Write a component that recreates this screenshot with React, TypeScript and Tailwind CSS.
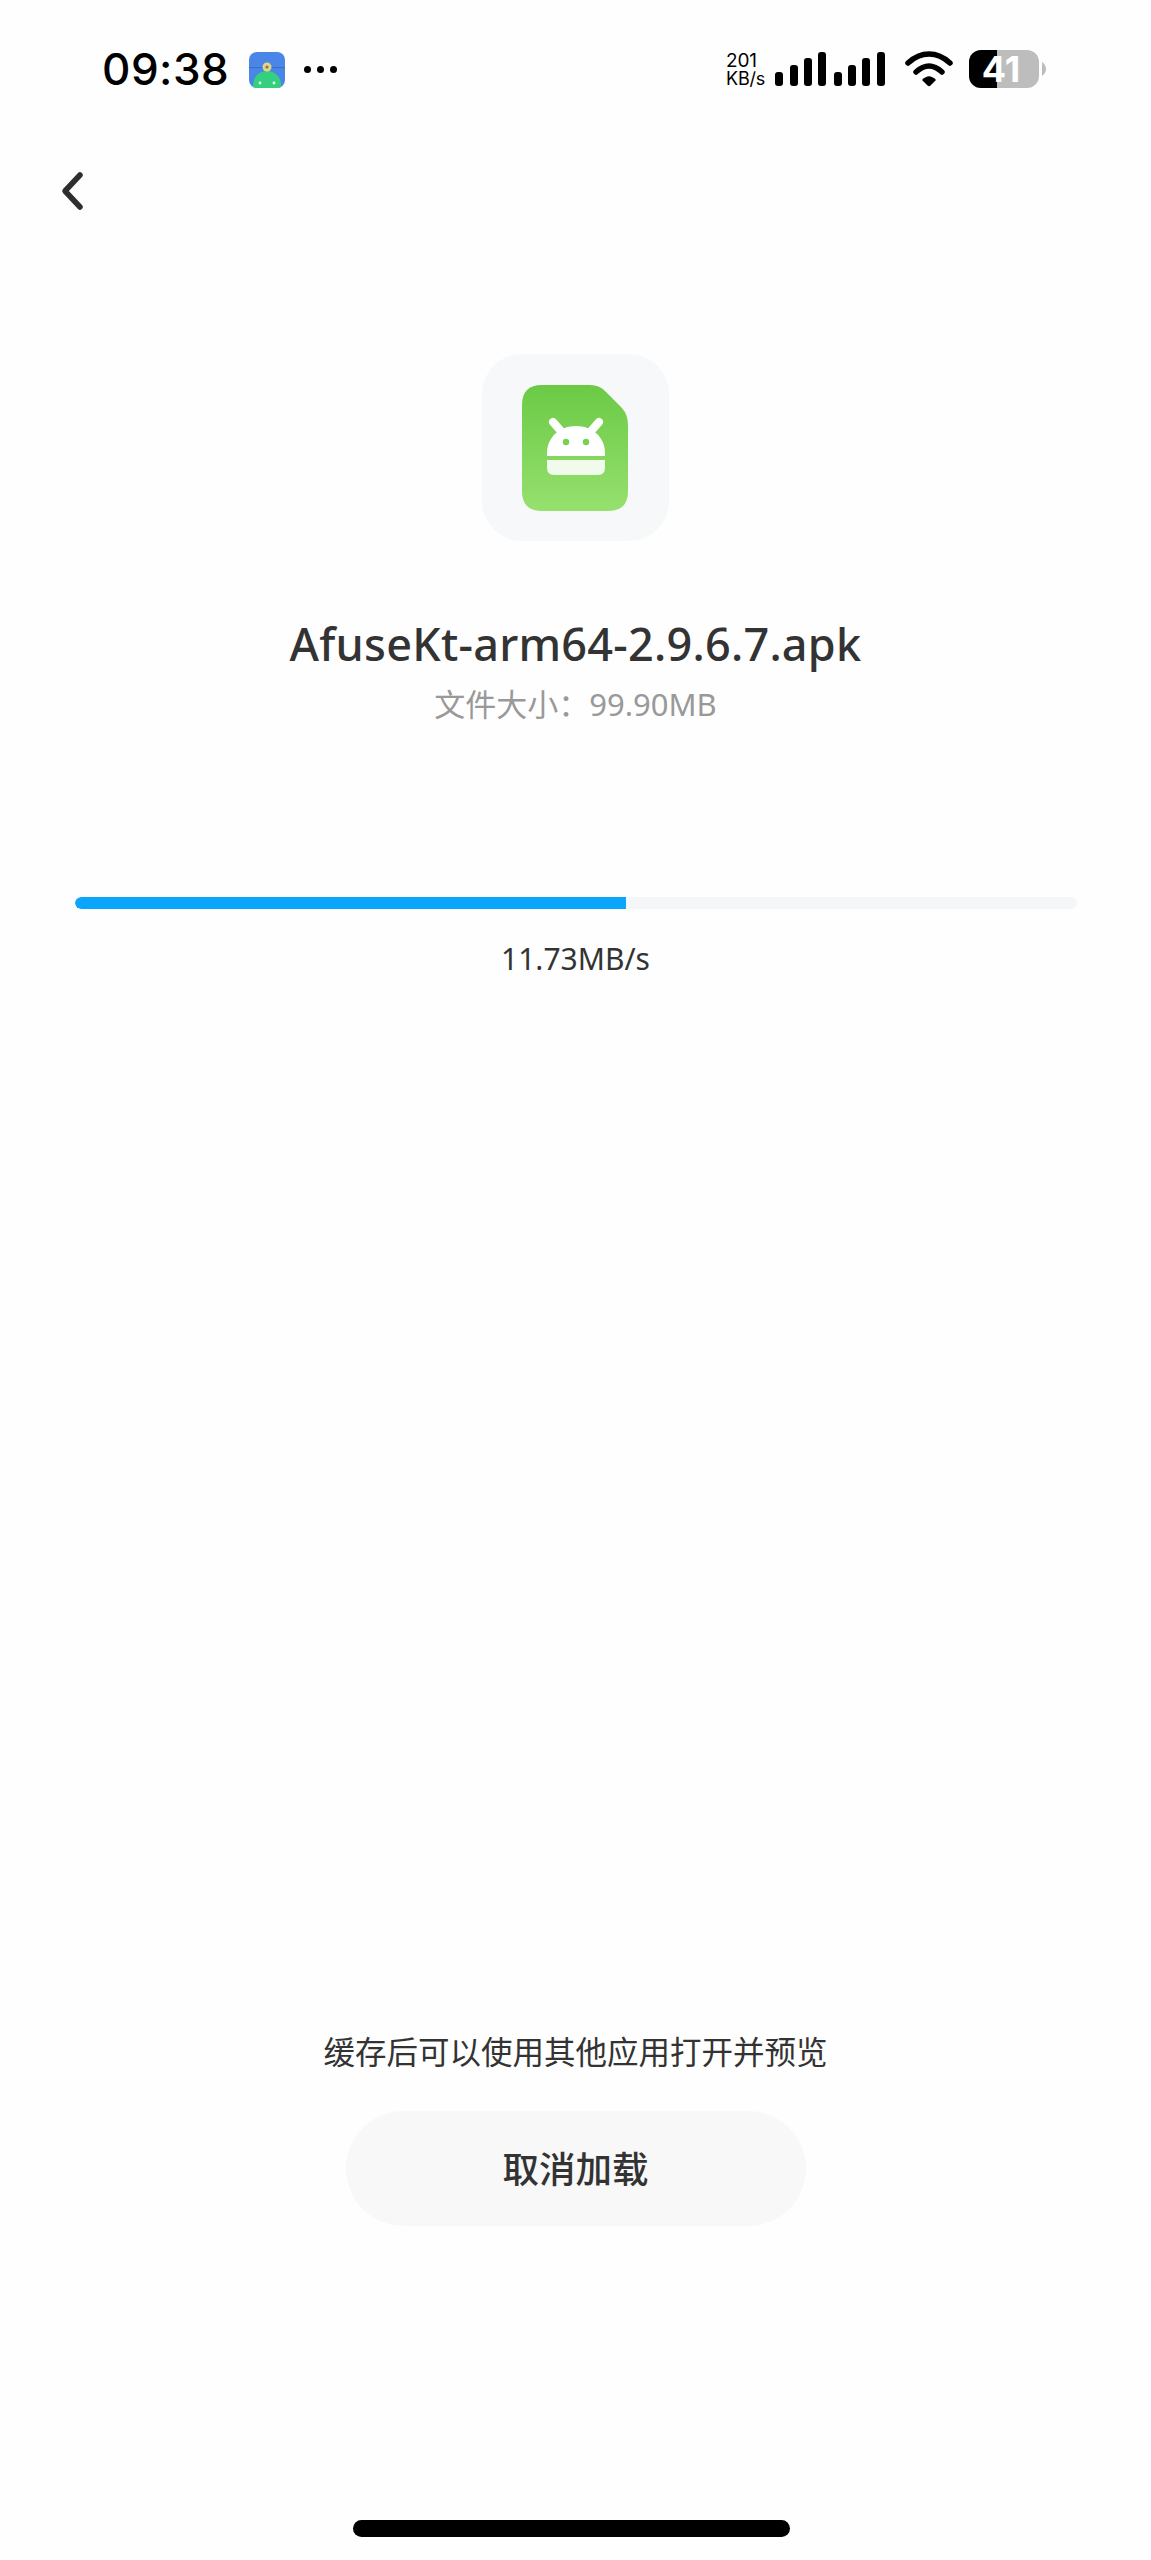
const cjk = 'font-["Noto_Sans","Noto_Sans_CJK_SC",sans-serif]'

function AppBadge() {
  return (
    <svg width="36" height="36" viewBox="0 0 36 36">
      <defs>
        <clipPath id="badge">
          <rect width="36" height="36" rx="8" />
        </clipPath>
      </defs>
      <g clipPath="url(#badge)">
        <rect width="36" height="36" fill="#4a86e8" />
        <rect y="15" width="36" height="1.2" fill="#3a6fc4" />
        <circle cx="18" cy="33" r="14" fill="#35d07f" />
        <circle cx="18" cy="15" r="4.5" fill="#e3d488" />
        <circle cx="18" cy="15" r="1.6" fill="#7c7c52" />
        <circle cx="11" cy="31" r="1.4" fill="#e8fff2" />
        <circle cx="25" cy="31" r="1.4" fill="#e8fff2" />
      </g>
    </svg>
  )
}

function StatusIcons() {
  return (
    <svg width="272" height="40" viewBox="0 0 272 40" className="block">
      {/* signal 1 */}
      <rect x="0" y="22" width="8" height="14" rx="3" fill="#000" />
      <rect x="15" y="15" width="8" height="21" rx="3" fill="#000" />
      <rect x="29" y="8" width="8" height="28" rx="3" fill="#000" />
      <rect x="43" y="2" width="8" height="34" rx="3" fill="#000" />
      {/* signal 2 */}
      <rect x="59" y="22" width="8" height="14" rx="3" fill="#000" />
      <rect x="73" y="15" width="8" height="21" rx="3" fill="#000" />
      <rect x="87" y="8" width="8" height="28" rx="3" fill="#000" />
      <rect x="102" y="2" width="8" height="34" rx="3" fill="#000" />
      {/* wifi */}
      <path d="M133 13 C146 1 162 1 175 13" fill="none" stroke="#000" strokeWidth="5.5" strokeLinecap="round" />
      <path d="M141 22 C150 14 158 14 167 22" fill="none" stroke="#000" strokeWidth="5.5" strokeLinecap="round" />
      <path d="M147 30 C152 25 156 25 161 30 L155.5 35.5 Q154 37 152.5 35.5 Z" fill="#000" />
      {/* battery */}
      <rect x="194" y="0" width="70" height="38" rx="12" fill="#bdbdbd" />
      <path d="M206 0 H222 V38 H206 A12 12 0 0 1 194 26 V12 A12 12 0 0 1 206 0 Z" fill="#000" />
      <path d="M267 12 Q271 15 271 19 Q271 23 267 26 Z" fill="#bdbdbd" />
    </svg>
  )
}

export default function App() {
  return (
    <div className={`w-[1151px] h-[2560px] bg-[#fefefe] flex flex-col ${cjk}`}>
      {/* Status bar */}
      <div className="flex items-start justify-between h-[130px] pl-[102px] pr-[104px] pt-[50px]">
        <div className="flex items-center h-[38px]">
          <span className='font-["Inter",sans-serif] text-[44px] font-medium leading-none text-black tracking-[0.5px]'>09:38</span>
          <div className="ml-[20px] mt-[1px]">
            <AppBadge />
          </div>
          <div className="ml-[19px] flex gap-[6px]">
            <span className="w-[7px] h-[7px] rounded-full bg-black" />
            <span className="w-[7px] h-[7px] rounded-full bg-black" />
            <span className="w-[7px] h-[7px] rounded-full bg-black" />
          </div>
        </div>
        <div className="flex items-start">
          <div className="w-[49px] h-[36px] mt-[2px] text-black font-['Inter',sans-serif]">
            <div className="text-[19px] leading-[18px] -tracking-[0.2px]">201</div>
            <div className="text-[18px] leading-[18px] -tracking-[0.2px]">KB/s</div>
          </div>
          <div className="relative">
            <StatusIcons />
            <span className="absolute left-[200px] top-[0px] w-[52px] text-center font-['Inter',sans-serif] text-[36px] leading-[38px] font-bold text-white">41</span>
          </div>
        </div>
      </div>

      {/* Toolbar */}
      <div className="h-[90px] pl-[61px] pt-[41px]">
        <svg width="24" height="40" viewBox="0 0 24 40">
          <path d="M19 4 L4 20 L19 36" fill="none" stroke="#2e2e2e" strokeWidth="5.5" strokeLinecap="round" strokeLinejoin="round" />
        </svg>
      </div>

      {/* File info */}
      <div className="flex flex-col items-center mt-[134px]">
        <div className="w-[187px] h-[187px] rounded-[40px] bg-[#f6f8fa] flex items-center justify-center pr-[2px]">
          <svg width="106" height="126" viewBox="0 0 106 126">
            <defs>
              <linearGradient id="file" x1="0" y1="0" x2="0" y2="1">
                <stop offset="0" stopColor="#6bca45" />
                <stop offset="1" stopColor="#96e06f" />
              </linearGradient>
            </defs>
            <path d="M20 0 H68 Q78 0 84 7 L100 23 Q106 30 106 40 V106 Q106 126 86 126 H20 Q0 126 0 106 V20 Q0 0 20 0 Z" fill="url(#file)" />
            {/* android */}
            <path d="M31 37 L38 45 M77 37 L70 45" stroke="#fff" strokeWidth="8" strokeLinecap="round" />
            <path d="M25 71 V68 C25 52 38 41 54 41 C70 41 83 52 83 68 V71 Z" fill="#fff" />
            <circle cx="44" cy="57" r="3.2" fill="#79d152" />
            <circle cx="64" cy="57" r="3.2" fill="#79d152" />
            <path d="M25 75 H83 V83 Q83 90 76 90 H32 Q25 90 25 83 Z" fill="#fff" fillOpacity="0.88" />
          </svg>
        </div>
        <h1 className="mt-[73px] text-[45px] leading-[60px] font-medium text-[#333333] tracking-[0.25px]">AfuseKt-arm64-2.9.6.7.apk</h1>
        <p className="mt-[8px] text-[31px] leading-[44px] text-[#999999]">文件大小：99.90MB</p>
      </div>

      {/* Progress */}
      <div className="mt-[171px] pl-[75px] pr-[74px]">
        <div className="h-[12px] rounded-full bg-[#f5f6f8] overflow-hidden">
          <div className="h-full w-[551px] bg-[#0ba6fb] rounded-l-full" />
        </div>
      </div>
      <p className="mt-[30px] text-center text-[30px] leading-[40px] text-[#333333]">11.73MB/s</p>

      {/* Actions */}
      <div className="flex flex-col items-center mt-auto">
        <p className="text-[31.5px] leading-[44px] text-[#333333]">缓存后可以使用其他应用打开并预览</p>
        <button className="mt-[37px] w-[460px] h-[115px] pt-[2px] rounded-full bg-[#f8f8f8] text-[36.5px] font-medium text-[#333333]">取消加载</button>
      </div>

      {/* Home indicator */}
      <div className="mt-[294px] mb-[23px] flex justify-center pr-[8px]">
        <div className="w-[437px] h-[17px] rounded-full bg-black" />
      </div>
    </div>
  )
}
